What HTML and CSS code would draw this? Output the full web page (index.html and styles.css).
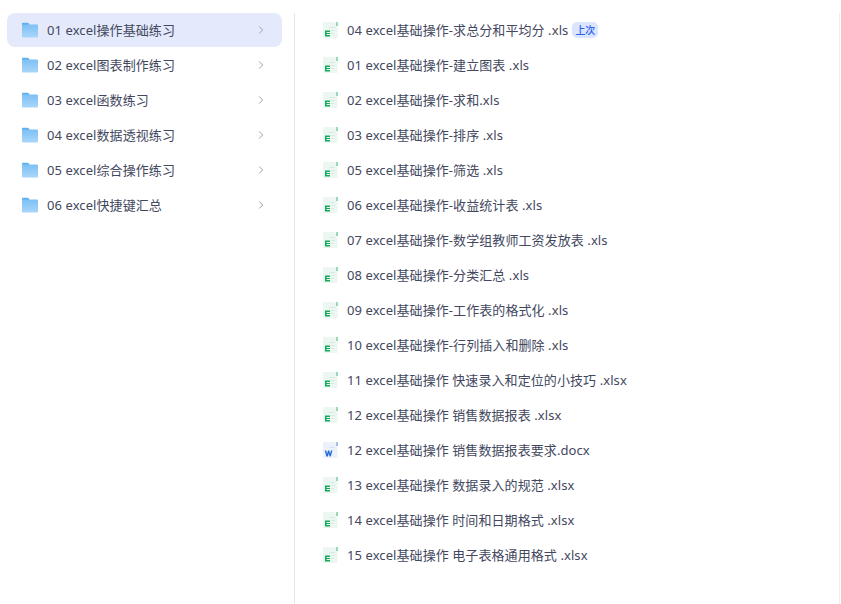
FILE: index.html
```html
<!DOCTYPE html>
<html lang="zh-CN">
<head>
<meta charset="utf-8">
<title>excel</title>
<link rel="stylesheet" href="styles.css">
</head>
<body>
<svg class="defs" width="0" height="0" aria-hidden="true">
  <defs>
    <linearGradient id="fg" x1="0" y1="0" x2="0" y2="1"><stop offset="0" stop-color="#7cc0f4"/><stop offset="1" stop-color="#a9d6fa"/></linearGradient>
    <symbol id="folder" viewBox="0 0 18 16">
      <path d="M1 1.600C1 1.100 1.400.8 1.900.8h4.700c.4 0 .7.2.9.5L8.600 3H1z" fill="#5fb0ee"/>
      <rect x="1" y="2.600" width="16" height="12.800" rx="1" fill="url(#fg)"/>
    </symbol>
    <symbol id="xls" viewBox="0 0 15 16">
      <path d="M1 0h10.500L14.500 3v13H1a1 1 0 0 1-1-1V1a1 1 0 0 1 1-1z" fill="#edf7f2"/>
      <path d="M13.500 0h1v4h-1z" fill="#3cb478"/>
      <path d="M6 5h6v1H6zM8 8h4v1H8zM8 11h3v1H8z" fill="#d6eadf"/>
      <path d="M2 8.500h5v1.400H3.600v1H7v1.200H3.600v1H7V14.500H2z" fill="#17a95f"/>
    </symbol>
    <symbol id="doc" viewBox="0 0 15 16">
      <path d="M1 0h10.500L14.500 3v13H1a1 1 0 0 1-1-1V1a1 1 0 0 1 1-1z" fill="#edf2fa"/>
      <path d="M13.500 0h1v4h-1z" fill="#4a84e4"/>
      <path d="M6 5h6v1H6z" fill="#d8e4f6"/>
      <path d="M1.800 8.500h1.500l.8 3.400.9-3.400h1.200l.9 3.400.8-3.400h1.500l-1.600 6H6.700l-.9-3.300-.9 3.300H3.400z" fill="#1f66d8"/>
    </symbol>
  </defs>
</svg>
<main class="page">
  <nav class="folders">
    <a class="folder active"><svg class="ficon"><use href="#folder"/></svg><span class="name">01 excel操作基础练习</span><svg class="chev" viewBox="0 0 6 10"><path d="M1.200 1.500L4.700 5 1.200 8.500"/></svg></a>
    <a class="folder"><svg class="ficon"><use href="#folder"/></svg><span class="name">02 excel图表制作练习</span><svg class="chev" viewBox="0 0 6 10"><path d="M1.200 1.500L4.700 5 1.200 8.500"/></svg></a>
    <a class="folder"><svg class="ficon"><use href="#folder"/></svg><span class="name">03 excel函数练习</span><svg class="chev" viewBox="0 0 6 10"><path d="M1.200 1.500L4.700 5 1.200 8.500"/></svg></a>
    <a class="folder"><svg class="ficon"><use href="#folder"/></svg><span class="name">04 excel数据透视练习</span><svg class="chev" viewBox="0 0 6 10"><path d="M1.200 1.500L4.700 5 1.200 8.500"/></svg></a>
    <a class="folder"><svg class="ficon"><use href="#folder"/></svg><span class="name">05 excel综合操作练习</span><svg class="chev" viewBox="0 0 6 10"><path d="M1.200 1.500L4.700 5 1.200 8.500"/></svg></a>
    <a class="folder"><svg class="ficon"><use href="#folder"/></svg><span class="name">06 excel快捷键汇总</span><svg class="chev" viewBox="0 0 6 10"><path d="M1.200 1.500L4.700 5 1.200 8.500"/></svg></a>
  </nav>
  <section class="files">
    <a class="file"><svg class="dicon"><use href="#xls"/></svg><span>04 excel基础操作-求总分和平均分 .xls</span><em class="tag">上次</em></a>
    <a class="file"><svg class="dicon"><use href="#xls"/></svg><span>01 excel基础操作-建立图表 .xls</span></a>
    <a class="file"><svg class="dicon"><use href="#xls"/></svg><span>02 excel基础操作-求和.xls</span></a>
    <a class="file"><svg class="dicon"><use href="#xls"/></svg><span>03 excel基础操作-排序 .xls</span></a>
    <a class="file"><svg class="dicon"><use href="#xls"/></svg><span>05 excel基础操作-筛选 .xls</span></a>
    <a class="file"><svg class="dicon"><use href="#xls"/></svg><span>06 excel基础操作-收益统计表 .xls</span></a>
    <a class="file"><svg class="dicon"><use href="#xls"/></svg><span>07 excel基础操作-数学组教师工资发放表 .xls</span></a>
    <a class="file"><svg class="dicon"><use href="#xls"/></svg><span>08 excel基础操作-分类汇总 .xls</span></a>
    <a class="file"><svg class="dicon"><use href="#xls"/></svg><span>09 excel基础操作-工作表的格式化 .xls</span></a>
    <a class="file"><svg class="dicon"><use href="#xls"/></svg><span>10 excel基础操作-行列插入和删除 .xls</span></a>
    <a class="file"><svg class="dicon"><use href="#xls"/></svg><span>11 excel基础操作 快速录入和定位的小技巧 .xlsx</span></a>
    <a class="file"><svg class="dicon"><use href="#xls"/></svg><span>12 excel基础操作 销售数据报表 .xlsx</span></a>
    <a class="file"><svg class="dicon"><use href="#doc"/></svg><span>12 excel基础操作 销售数据报表要求.docx</span></a>
    <a class="file"><svg class="dicon"><use href="#xls"/></svg><span>13 excel基础操作 数据录入的规范 .xlsx</span></a>
    <a class="file"><svg class="dicon"><use href="#xls"/></svg><span>14 excel基础操作 时间和日期格式 .xlsx</span></a>
    <a class="file"><svg class="dicon"><use href="#xls"/></svg><span>15 excel基础操作 电子表格通用格式 .xlsx</span></a>
  </section>
</main>
</body>
</html>
```
FILE: styles.css
```css
* { box-sizing: border-box; }
html, body { margin: 0; height: 100%; overflow: hidden; background: #fff; }
body { font: 13px/20px "Noto Sans", "Noto Sans CJK SC", sans-serif; color: #43485e; letter-spacing: .08px; }
.defs { position: absolute; }
.page { display: flex; height: 604px; width: 840px; padding-top: 13px; }
.folders { width: 295px; flex: none; padding: 0 12px 0 7px; border-right: 1px solid #e8e8ea; }
.folder { display: flex; align-items: center; height: 34px; margin-bottom: 1px; padding: 0 18px 0 14px; border-radius: 8px; }
.folder.active { background: #e4eafc; }
.ficon { width: 18px; height: 16px; flex: none; margin-right: 8px; }
.name { flex: 1; }
.chev { width: 6px; height: 10px; fill: none; stroke: #9ea1ae; stroke-width: 1; }
.files { flex: 1; padding: 0 0 0 28px; border-right: 1px solid #eeeeef; }
.file { display: flex; align-items: center; height: 34px; margin-bottom: 1px; }
.dicon { width: 15px; height: 16px; flex: none; margin-right: 9px; }
.tag { font-style: normal; font-weight: 500; font-size: 10px; line-height: 16px; letter-spacing: 0; height: 16px; padding: 0 3px; margin-left: 4px; border-radius: 5px; background: #dbe5fd; color: #2b62f0; }
```
